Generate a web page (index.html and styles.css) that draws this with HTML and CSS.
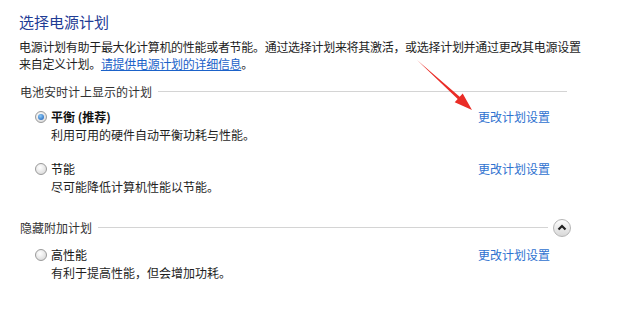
FILE: index.html
```html
<!DOCTYPE html>
<html lang="zh-CN">
<head>
  <meta charset="UTF-8">
  <title>选择电源计划</title>
  <link rel="stylesheet" href="styles.css">
</head>
<body>
  <div class="page">
    <h1 class="title">选择电源计划</h1>
    <p class="intro">电源计划有助于最大化计算机的性能或者节能。通过选择计划来将其激活，或选择计划并通过更改其电源设置<br>来自定义计划。<a href="#">请提供电源计划的详细信息</a>。</p>

    <div class="section">
      <span class="section-name">电池安时计上显示的计划</span>
      <span class="rule"></span>
    </div>

    <div class="plan first">
      <div class="plan-row">
        <span class="radio checked"></span>
        <b class="plan-name">平衡 (推荐)</b>
        <a class="plan-link" href="#">更改计划设置</a>
      </div>
      <div class="plan-desc">利用可用的硬件自动平衡功耗与性能。</div>
    </div>

    <div class="plan">
      <div class="plan-row">
        <span class="radio"></span>
        <span class="plan-name">节能</span>
        <a class="plan-link" href="#">更改计划设置</a>
      </div>
      <div class="plan-desc">尽可能降低计算机性能以节能。</div>
    </div>

    <div class="section second">
      <span class="section-name">隐藏附加计划</span>
      <span class="rule"></span>
      <span class="toggle">
        <svg width="10" height="7" viewBox="0 0 10 7"><path d="M1.5 5.5 L5 2 L8.5 5.5" fill="none" stroke="#222" stroke-width="2.2"/></svg>
      </span>
    </div>

    <div class="plan after-hidden">
      <div class="plan-row">
        <span class="radio"></span>
        <span class="plan-name">高性能</span>
        <a class="plan-link" href="#">更改计划设置</a>
      </div>
      <div class="plan-desc">有利于提高性能，但会增加功耗。</div>
    </div>
  </div>

  <svg class="arrow" width="620" height="328" viewBox="0 0 620 328">
    <polygon points="417,60 459.7,96.8 462.7,93.5 472,110 454.7,102.3 457.7,99" fill="#ea2d27"/>
  </svg>
</body>
</html>
```

FILE: styles.css
```css
body {
  margin: 0;
  background: #fff;
  font-family: "Noto Sans CJK SC", "Noto Sans", sans-serif;
  font-size: 12px;
  line-height: 17px;
  color: #1e1e1e;
}
.page {
  width: 548px;
  padding: 12px 0 0 19px;
}
.title {
  margin: 0;
  font-size: 15px;
  line-height: 20px;
  font-weight: normal;
  color: #1f3c95;
}
.intro {
  margin: 6px 0 0;
  white-space: nowrap;
  letter-spacing: -0.3px;
}
.intro a {
  color: #1b62c9;
}
.section {
  display: flex;
  align-items: center;
  margin-top: 11px;
  padding-left: 1px;
  height: 17px;
}
.section-name {
  color: #333;
}
.rule {
  flex: 1;
  height: 1px;
  margin-left: 6px;
  background: #d4d4d4;
}
.section.second {
  margin-top: 24px;
}
.toggle {
  width: 18px;
  height: 18px;
  margin-left: 5px;
  margin-right: -4px;
  border-radius: 50%;
  border: 1px solid #b5b5b5;
  background: linear-gradient(#fdfdfd, #d8d8d8);
  display: flex;
  align-items: center;
  justify-content: center;
  box-sizing: border-box;
}
.plan {
  margin-top: 17px;
  padding-left: 16px;
}
.plan.first {
  margin-top: 8px;
}
.plan.after-hidden {
  margin-top: 10px;
}
.plan-row {
  display: flex;
  align-items: center;
}
.radio {
  width: 12px;
  height: 12px;
  border-radius: 50%;
  border: 1px solid #9a9a9a;
  box-sizing: border-box;
  background: radial-gradient(circle at 40% 35%, #fff, #d2d2d2);
  margin-right: 4px;
  position: relative;
}
.radio.checked::after {
  content: "";
  position: absolute;
  left: 2px;
  top: 2px;
  width: 6px;
  height: 6px;
  border-radius: 50%;
  background: radial-gradient(circle at 40% 35%, #8ccaf7, #1457b3);
}
.plan-name {
  color: #111;
}
.plan-link {
  margin-left: auto;
  margin-right: 17px;
  color: #2f72d0;
  text-decoration: none;
}
.plan-desc {
  margin-top: 1px;
  padding-left: 16px;
}
.arrow {
  position: absolute;
  left: 0;
  top: 0;
  pointer-events: none;
}
```
